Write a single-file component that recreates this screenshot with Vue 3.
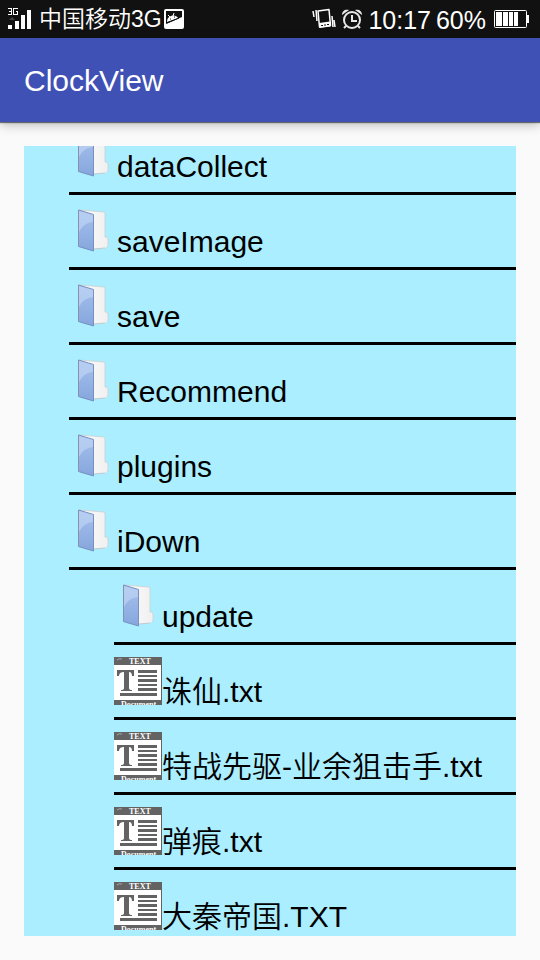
<script setup>
const entries = [
  { name: 'dataCollect', level: 1, type: 'folder' },
  { name: 'saveImage', level: 1, type: 'folder' },
  { name: 'save', level: 1, type: 'folder' },
  { name: 'Recommend', level: 1, type: 'folder' },
  { name: 'plugins', level: 1, type: 'folder' },
  { name: 'iDown', level: 1, type: 'folder' },
  { name: 'update', level: 2, type: 'folder' },
  { name: '诛仙.txt', level: 2, type: 'text' },
  { name: '特战先驱-业余狙击手.txt', level: 2, type: 'text' },
  { name: '弹痕.txt', level: 2, type: 'text' },
  { name: '大秦帝国.TXT', level: 2, type: 'text' },
]
</script>

<template>
  <div class="screen">
    <div class="status">
      <svg class="signal" width="24" height="24" viewBox="0 0 24 24" aria-hidden="true">
        <path d="M0 1h4v7h-4v-1h3v-2h-2v-1h2v-2h-3zM10 1v1h-4v5h3v-2h-1v-1h2v4h-5v-7z" fill="#fff" />
        <path d="M1 13l3-3 3 3z" fill="#444" />
        <path d="M0 18h4v4h-4zM7 14h4v8h-4zM13 8h4v14h-4zM19 3h4v19h-4z" fill="#fff" />
      </svg>
      <span class="carrier">中国移动3G</span>
      <svg class="picture" width="20" height="22" viewBox="0 0 20 22" aria-hidden="true">
        <rect x="1" y="2" width="18" height="18" rx="1" fill="#111" stroke="#fff" stroke-width="2" />
        <path d="M2 19v-3l16-7v10z" fill="#fff" />
        <path d="M3 14c0-3 1-5 4-6 3-1 6 0 7 2z" fill="#fff" />
        <path d="M4 7l2 2M10 5l-1 3" fill="none" stroke="#fff" stroke-width="1" />
        <path d="M3 15l12-5" fill="none" stroke="#111" stroke-width="1" />
        <path d="M6 11h1M10 9h1" stroke="#111" stroke-width="1" />
      </svg>
      <span class="spacer"></span>
      <svg class="vibrate" width="24" height="22" viewBox="0 0 24 22" aria-hidden="true">
        <path d="M6 3l11-1.500 1.500 16-11 1.500z" fill="none" stroke="#fff" stroke-width="1.5" stroke-linejoin="round" />
        <path d="M7 15l11-1.500.5 5-11 1.500z" fill="#fff" />
        <path d="M9 17.500h2M12 17h2M15 16.500h2" stroke="#111" />
        <path d="M1 3l1 6M4 2l1 11M20 8l1 11M22 12l1 7" fill="none" stroke="#fff" stroke-width="1.5" />
      </svg>
      <svg class="alarm" width="22" height="22" viewBox="0 0 22 22" aria-hidden="true">
        <circle cx="11" cy="12" r="8" fill="none" stroke="#e8e8e8" stroke-width="2" />
        <path d="M11 7v6h5" fill="none" stroke="#e8e8e8" stroke-width="2" />
        <path d="M1 7c0-4 3-6 7-5zM21 7c0-4-3-6-7-5z" fill="#e8e8e8" />
        <path d="M5 18l-2 2M17 18l2 2" fill="none" stroke="#e8e8e8" stroke-width="2" />
      </svg>
      <span class="clock">10:17</span>
      <span class="percent">60%</span>
      <svg class="battery" width="35" height="18" viewBox="0 0 35 18" aria-hidden="true">
        <rect x="0.5" y="0.5" width="32" height="17" rx="1" fill="none" stroke="#fff" />
        <path d="M33 5h2v8h-2z" fill="#fff" />
        <path d="M2 2h6v14h-6zM9 2h5v14h-5zM15 2h4v14h-4zM20 2h4v14h-4z" fill="#fff" />
      </svg>
    </div>

    <header class="toolbar">
      <h1>ClockView</h1>
    </header>

    <main class="content">
      <div class="viewport">
        <ul class="tree">
          <li v-for="entry in entries" :key="entry.name" :class="'level-' + entry.level">
            <button type="button" class="row">
              <svg v-if="entry.type === 'folder'" class="icon" viewBox="0 0 48 48" aria-hidden="true">
                <defs>
                  <linearGradient id="cover" x1="0" y1="0" x2="0" y2="1">
                    <stop offset="0" stop-color="#a6c1ee" />
                    <stop offset="1" stop-color="#86a6dc" />
                  </linearGradient>
                  <linearGradient id="paper" x1="0" y1="0" x2="1" y2="0">
                    <stop offset="0" stop-color="#fbfbfb" />
                    <stop offset="1" stop-color="#f0f0f0" />
                  </linearGradient>
                </defs>
                <path d="M12 3l23 2 1 1v24h2l1 2v7l-3 2-12 1z" fill="url(#paper)" />
                <path d="M10 3l25 2 1 1v24h2l1 2v7l-1 1" fill="none" stroke="#c9cfd2" stroke-width="0.8" />
                <path d="M25 42l11-1" stroke="#c3c9cc" stroke-width="1" />
                <path d="M9.500 3l15 4.500v36.500l-15-4.500z" fill="url(#cover)" stroke="#7590c2" stroke-width="1" />
                <path d="M10 4l14 4v7q-10 1-14 10z" fill="#c2d5f6" opacity="0.65" />
                <path d="M9.500 3v36" stroke="#8592aa" stroke-width="1" />
              </svg>
              <svg v-else class="icon" viewBox="0 0 48 48" aria-hidden="true">
                <path d="M0 0h48v48h-48z" fill="#636363" />
                <path d="M0 8h47v35h-47z" fill="#fff" />
                <path d="M3 3q2-2 5-1" fill="none" stroke="#aaa" stroke-width="1" />
                <text x="15" y="7" class="icon-title">TEXT</text>
                <path d="M3 13h17v6h-2q0-4-3-4v16q0 2 3 2v1h-11v-1q3 0 3-2v-16q-5 0-5 4h-2z" fill="#636363" />
                <path d="M24 13h19v3h-19zM24 18h19v2h-19zM24 22h19v3h-19zM24 27h19v2h-19zM24 31h19v3h-19zM6 36h37v3h-37z" fill="#636363" />
                <text x="7" y="50" class="icon-title">Document</text>
              </svg>
              <span class="name">{{ entry.name }}</span>
            </button>
          </li>
        </ul>
      </div>
    </main>
  </div>
</template>

<style>
body {
  background: #fafafa;
}
</style>

<style scoped>
.screen {
  display: flex;
  flex-direction: column;
  height: 100vh;
  font-family: "Liberation Sans", "Noto Sans CJK SC", sans-serif;
  font-weight: 400;
}

.status {
  display: flex;
  align-items: center;
  flex: none;
  height: 38px;
  padding: 0 11px 0 8px;
  background: #111;
  color: #fff;
  white-space: nowrap;
}

.status svg {
  flex: none;
}

.carrier {
  margin-left: 7px;
  margin-right: 2px;
  font-size: 23px;
  font-weight: 350;
  line-height: 38px;
}

.spacer {
  flex: 1;
}

.alarm {
  margin: 0 5px;
}

.clock,
.percent {
  padding-top: 2px;
  font-size: 25px;
  line-height: 36px;
}

.percent {
  margin: 0 8px 0 5px;
}

.toolbar {
  display: flex;
  align-items: center;
  flex: none;
  height: 84px;
  padding: 0 24px;
  background: #3f51b5;
  color: #fff;
  box-shadow: 0 1px 1px rgba(0, 0, 0, 0.5), 0 3px 10px rgba(0, 0, 0, 0.25);
}

.toolbar h1 {
  margin: 0;
  padding-top: 2px;
  font-size: 30px;
  line-height: 36px;
  font-weight: 400;
}

.content {
  display: flex;
  flex: 1;
  min-height: 0;
  padding: 24px;
}

.viewport {
  flex: 1;
  min-width: 0;
  overflow: hidden;
  background: #aef;
}

.tree {
  margin: -26px 0 0;
  padding: 0;
  list-style: none;
}

.level-1 {
  margin-left: 45px;
}

.level-2 {
  margin-left: 90px;
}

.row {
  display: flex;
  align-items: flex-start;
  width: 100%;
  height: 75px;
  margin: 0;
  padding: 12px 0 0;
  border: 0;
  border-bottom: 3px solid #000;
  background: transparent;
  color: #000;
  font: inherit;
  font-weight: 350;
  text-align: left;
}

.icon {
  flex: none;
  width: 48px;
  height: 48px;
}

.icon-title {
  fill: #fff;
  font-family: "Liberation Serif", serif;
  font-size: 8px;
  font-weight: 700;
}

.name {
  padding-top: 17px;
  font-size: 30px;
  line-height: 36px;
  white-space: nowrap;
}
</style>
